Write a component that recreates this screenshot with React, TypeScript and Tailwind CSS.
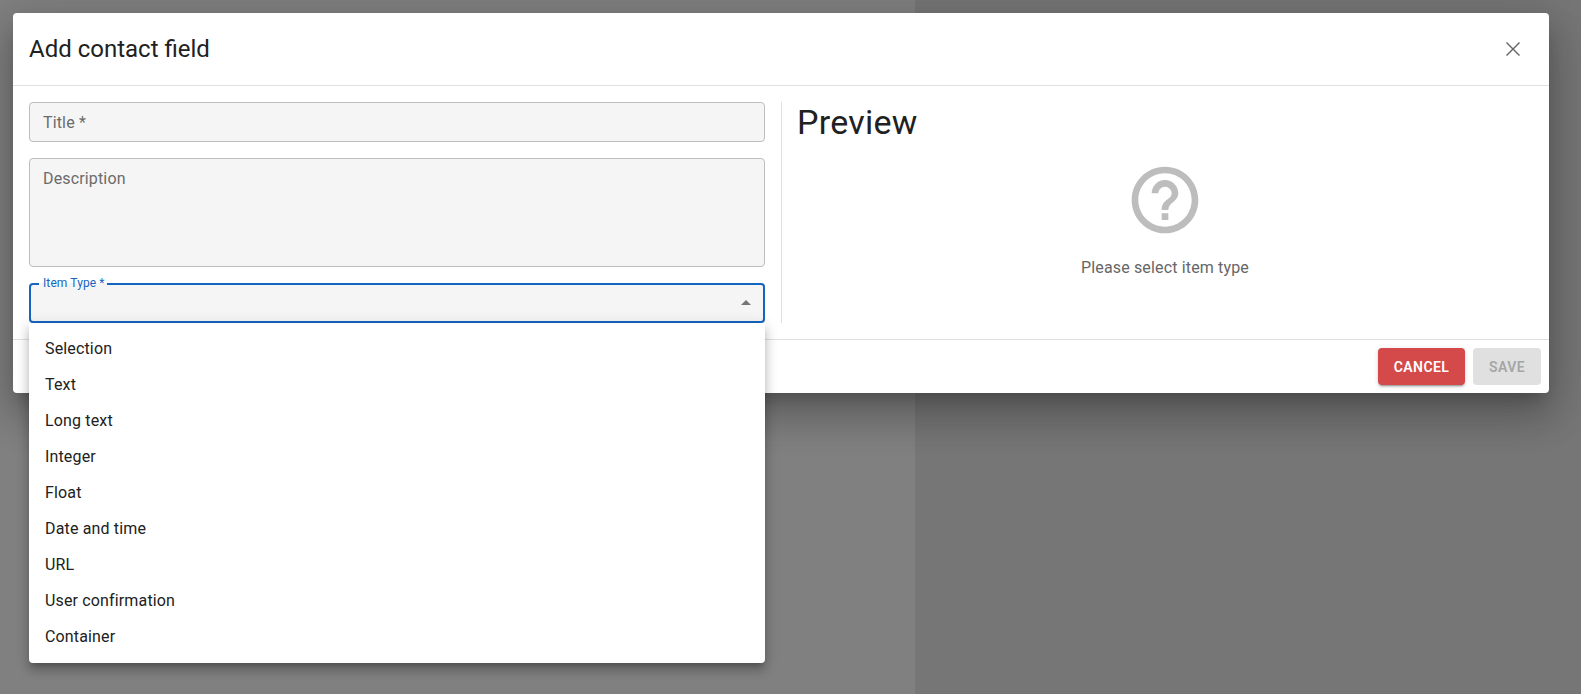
const itemTypes = [
  "Selection",
  "Text",
  "Long text",
  "Integer",
  "Float",
  "Date and time",
  "URL",
  "User confirmation",
  "Container",
];

function ItemTypeSelect() {
  return (
    <div className="relative h-10 rounded bg-[#f5f5f5]">
      <fieldset className="absolute inset-x-0 bottom-0 top-[-5px] rounded border-2 border-[#1565c0] px-2">
        <legend className="invisible h-[11px] px-[4px] text-xs leading-[11px]">
          Item Type *
        </legend>
      </fieldset>
      <span className="absolute left-[14px] top-[-9px] text-xs leading-[18px] tracking-[0.1px] text-[#1565c0]">
        Item Type *
      </span>
      <svg
        viewBox="0 0 24 24"
        className="absolute right-[7px] top-[8px] h-6 w-6 fill-[#757575]"
      >
        <path d="M7 14l5-5 5 5z" />
      </svg>
      <ul className="absolute inset-x-0 top-full z-10 rounded-b bg-white py-2 text-[#212121] shadow-[0_5px_5px_-3px_rgba(0,0,0,0.2),0_8px_10px_1px_rgba(0,0,0,0.14),0_3px_14px_2px_rgba(0,0,0,0.12)]">
        {itemTypes.map((type) => (
          <li key={type} className="flex h-9 items-center px-4 text-base tracking-[0.15px]">
            {type}
          </li>
        ))}
      </ul>
    </div>
  );
}

function Preview() {
  return (
    <div className="flex-1">
      <h2 className="text-[34px] leading-10 tracking-[0.25px] text-[#212121]">Preview</h2>
      <div className="flex flex-col items-center pt-[18px]">
        <svg viewBox="0 0 24 24" className="h-20 w-20 fill-[#bdbdbd]">
          <path d="M11 18h2v-2h-2v2zm1-16C6.48 2 2 6.48 2 12s4.48 10 10 10 10-4.48 10-10S17.52 2 12 2zm0 18c-4.41 0-8-3.59-8-8s3.59-8 8-8 8 3.59 8 8-3.59 8-8 8zm0-14c-2.21 0-4 1.79-4 4h2c0-1.1.9-2 2-2s2 .9 2 2c0 2-3 1.75-3 5h2c0-2.25 3-2.5 3-5 0-2.21-1.79-4-4-4z" />
        </svg>
        <p className="mt-4 text-base leading-6 tracking-[0.15px] text-[#666666]">
          Please select item type
        </p>
      </div>
    </div>
  );
}

export default function App() {
  return (
    <div
      className="relative flex h-screen overflow-hidden"
      style={{ fontFamily: "Roboto, sans-serif" }}
    >
      <div className="w-[915px] bg-[#808080]" />
      <div className="flex-1 bg-[#767676]" />

      <div className="absolute left-[13px] top-[13px] w-[1536px] rounded bg-white shadow-[0_11px_15px_-7px_rgba(0,0,0,0.2),0_24px_38px_3px_rgba(0,0,0,0.16),0_9px_46px_8px_rgba(0,0,0,0.14)]">
        <header className="flex h-[73px] items-center justify-between border-b border-[#e0e0e0] px-4">
          <h1 className="text-2xl text-[#212121]">Add contact field</h1>
          <svg viewBox="0 0 24 24" className="mr-2 h-6 w-6 fill-[#666666]">
            <path d="M19 6 18 5 12 11 6 5 5 6 11 12 5 18 6 19 12 13 18 19 19 18 13 12z" />
          </svg>
        </header>

        <div className="flex p-4">
          <div className="flex w-[736px] flex-col gap-4">
            <input
              placeholder="Title *"
              className="h-10 rounded border border-[#bdbdbd] bg-[#f5f5f5] px-[13px] text-base tracking-[0.15px] outline-none placeholder:text-[#6b6b6b]"
            />
            <textarea
              placeholder="Description"
              className="h-[109px] resize-none rounded border border-[#bdbdbd] bg-[#f5f5f5] px-[13px] py-2 text-base tracking-[0.15px] outline-none placeholder:text-[#6b6b6b]"
            />
            <ItemTypeSelect />
          </div>
          <div className="ml-4 mr-[15px] w-px bg-[#e0e0e0]" />
          <Preview />
        </div>

        <footer className="flex justify-end gap-2 border-t border-[#e0e0e0] p-2">
          <button className="h-[37px] w-[87px] rounded bg-[#d44949] text-sm font-semibold tracking-[0.4px] text-white shadow-[0_3px_1px_-2px_rgba(0,0,0,0.2),0_2px_2px_0_rgba(0,0,0,0.14),0_1px_5px_0_rgba(0,0,0,0.12)]">
            CANCEL
          </button>
          <button className="h-[37px] w-[68px] rounded bg-[#e0e0e0] text-sm font-semibold tracking-[0.4px] text-[#a6a6a6]">
            SAVE
          </button>
        </footer>
      </div>
    </div>
  );
}
